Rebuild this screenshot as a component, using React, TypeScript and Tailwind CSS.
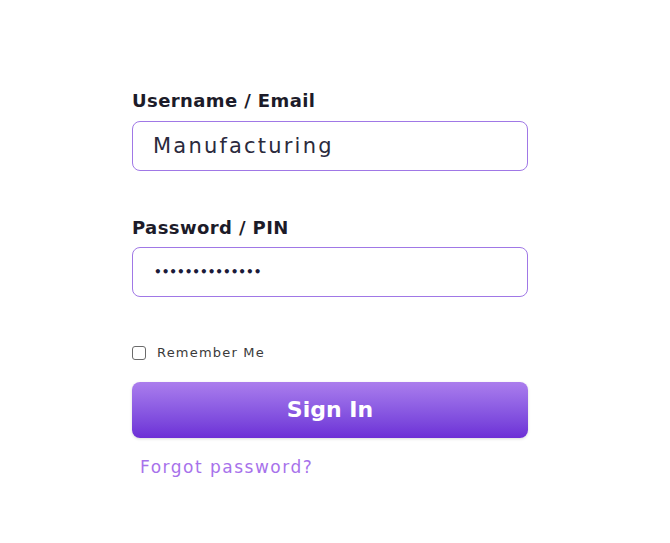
import React from 'react';

export default function App() {
    return (
        <div className="min-h-[543px] w-full bg-white font-['DejaVu_Sans',sans-serif]">
            <form className="ml-[132px] w-[396px] pt-[89px] flex flex-col">
                {/* Username */}
                <label className="text-[18px] leading-[24px] tracking-[0.4px] font-bold text-[#1c1b29]">
                    Username / Email
                </label>
                <div className="mt-[8px] h-[50px] rounded-[8px] border-[1.5px] border-[#a078e6] flex items-center px-[20px]">
                    <span className="text-[21px] leading-[28px] tracking-[2.2px] text-[#2b2a3d]">Manufacturing</span>
                </div>

                {/* Password */}
                <label className="mt-[45px] text-[18px] leading-[24px] tracking-[0.4px] font-bold text-[#1c1b29]">
                    Password / PIN
                </label>
                <div className="mt-[7px] h-[50px] rounded-[8px] border-[1.5px] border-[#a078e6] flex items-center px-[21px]">
                    <span className="text-[12px] leading-[16px] text-[#1c1b3a] font-bold">••••••••••••••</span>
                </div>

                {/* Remember */}
                <div className="mt-[48px] flex items-center gap-[11px]">
                    <span className="w-[14px] h-[14px] rounded-[3px] border-[1.5px] border-[#6b6b6b] bg-white" />
                    <span className="text-[13px] leading-[16px] tracking-[1.2px] text-[#3a3a3a]">Remember Me</span>
                </div>

                <button
                    type="button"
                    className="mt-[21px] h-[56px] rounded-[8px] bg-gradient-to-b from-[#ab7ded] to-[#6d2ed6] text-white text-[22px] leading-[28px] font-bold shadow-[0_1px_3px_rgba(0,0,0,0.15)]"
                >
                    Sign In
                </button>

                <a className="mt-[17px] ml-[8px] text-[17px] leading-[24px] tracking-[1.5px] text-[#a772eb]">
                    Forgot password?
                </a>
            </form>
        </div>
    );
}
